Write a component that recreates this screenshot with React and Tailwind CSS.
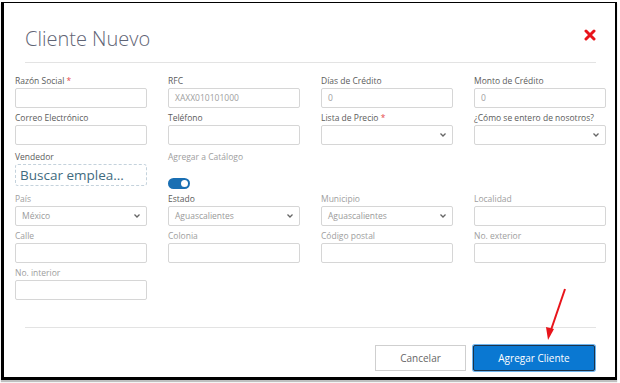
import React from "react";

const font = { fontFamily: '"Open Sans", "Liberation Sans", sans-serif' };

function Chevron() {
  return (
    <svg width="8" height="6" viewBox="0 0 8 6" className="shrink-0">
      <polyline points="1.5,1.5 4,4 6.5,1.5" fill="none" stroke="#666" strokeWidth="1.3" />
    </svg>
  );
}

function Field({ label, required, light, className = "", children }) {
  return (
    <div className={`flex flex-col ${className}`}>
      <p className={`h-[14px] leading-[14px] text-[8.5px] ${light ? "text-[#9e9e9e]" : "text-[#5c5c5c]"}`}>
        {label}
        {required && <span className="text-[#e5484d]"> *</span>}
      </p>
      {children}
    </div>
  );
}

function Input({ value }) {
  return (
    <div className="h-[20px] border border-[#d6d6d6] rounded-[2px] flex items-center px-[6px] text-[8.5px] text-[#a0a0a0]">
      {value}
    </div>
  );
}

function Select({ value }) {
  return (
    <div className="h-[20px] border border-[#d6d6d6] rounded-[2px] flex items-center justify-between pl-[6px] pr-[5px] text-[8.5px] text-[#9a9a9a]">
      <span>{value}</span>
      <Chevron />
    </div>
  );
}

export default function App() {
  return (
    <div className="relative w-[620px] h-[383px] bg-white" style={font}>
      <div className="ml-[1px] mt-[2px] w-[616px] h-[378px] border-l-[3px] border-t border-r-2 border-b-[3px] border-black shadow-[0_2px_1px_rgba(0,0,0,0.25)] flex flex-col">
        <div className="flex items-start justify-between pl-[21px] pr-[19px] pt-[22px]">
          <h1 className="text-[20px] leading-[28px] font-light text-[#5f6475]">Cliente Nuevo</h1>
          <svg width="12" height="12" viewBox="0 0 12 12" className="mt-[4px]">
            <path d="M2 2 L10 10 M10 2 L2 10" stroke="#e8141b" strokeWidth="3" strokeLinecap="round" />
          </svg>
        </div>
        <div className="ml-[21px] mr-[19px] mt-[9px] border-t border-[#e3e3e3]" />

        <div className="pl-[11px] pr-[9px] pt-[11px] grid grid-cols-4 gap-x-[21px] gap-y-[3px]">
          <Field label="Razón Social" required>
            <Input />
          </Field>
          <Field label="RFC">
            <Input value="XAXX010101000" />
          </Field>
          <Field label="Días de Crédito">
            <Input value="0" />
          </Field>
          <Field label="Monto de Crédito">
            <Input value="0" />
          </Field>

          <Field label="Correo Electrónico">
            <Input />
          </Field>
          <Field label="Teléfono">
            <Input />
          </Field>
          <Field label="Lista de Precio" required>
            <Select />
          </Field>
          <Field label="¿Cómo se entero de nosotros?">
            <Select />
          </Field>

          <Field label="Vendedor" className="pt-[2px]">
            <div className="h-[22px] border border-dashed border-[#c4d2dc] rounded-[3px] flex items-center px-[4px] text-[13.5px] text-[#3f6b80]">
              Buscar emplea...
            </div>
          </Field>
          <Field label="Agregar a Catálogo" light className="pt-[2px]">
            <div className="mt-[14px] w-[22px] h-[11px] rounded-full bg-[#1a6fb3] flex items-center justify-end pr-[2px]">
              <div className="w-[7px] h-[7px] rounded-full bg-white" />
            </div>
          </Field>
          <div />
          <div />

          <Field label="País" light>
            <Select value="México" />
          </Field>
          <Field label="Estado">
            <Select value="Aguascalientes" />
          </Field>
          <Field label="Municipio" light>
            <Select value="Aguascalientes" />
          </Field>
          <Field label="Localidad" light>
            <Input />
          </Field>

          <Field label="Calle" light>
            <Input />
          </Field>
          <Field label="Colonia" light>
            <Input />
          </Field>
          <Field label="Código postal" light>
            <Input />
          </Field>
          <Field label="No. exterior" light>
            <Input />
          </Field>

          <Field label="No. interior" light>
            <Input />
          </Field>
        </div>

        <div className="ml-[21px] mr-[19px] mt-[27px] border-t border-[#e3e3e3]" />
        <div className="flex justify-end gap-[7px] mr-[20px] mt-[17px]">
          <button className="w-[91px] h-[26px] border border-[#cfcfcf] bg-white text-[10px] text-[#666]">
            Cancelar
          </button>
          <button className="w-[122px] h-[26px] border border-[#1d3348] rounded-[2px] bg-[#0a78d2] text-[10px] text-white ring-1 ring-[#6db4ee]">
            Agregar Cliente
          </button>
        </div>
      </div>

      <svg className="absolute inset-0 pointer-events-none" width="620" height="383" viewBox="0 0 620 383">
        <line x1="565" y1="287" x2="551" y2="328" stroke="#e8141b" strokeWidth="2" />
        <polygon points="546,325 554,327 548,338" fill="#e8141b" />
      </svg>
    </div>
  );
}
